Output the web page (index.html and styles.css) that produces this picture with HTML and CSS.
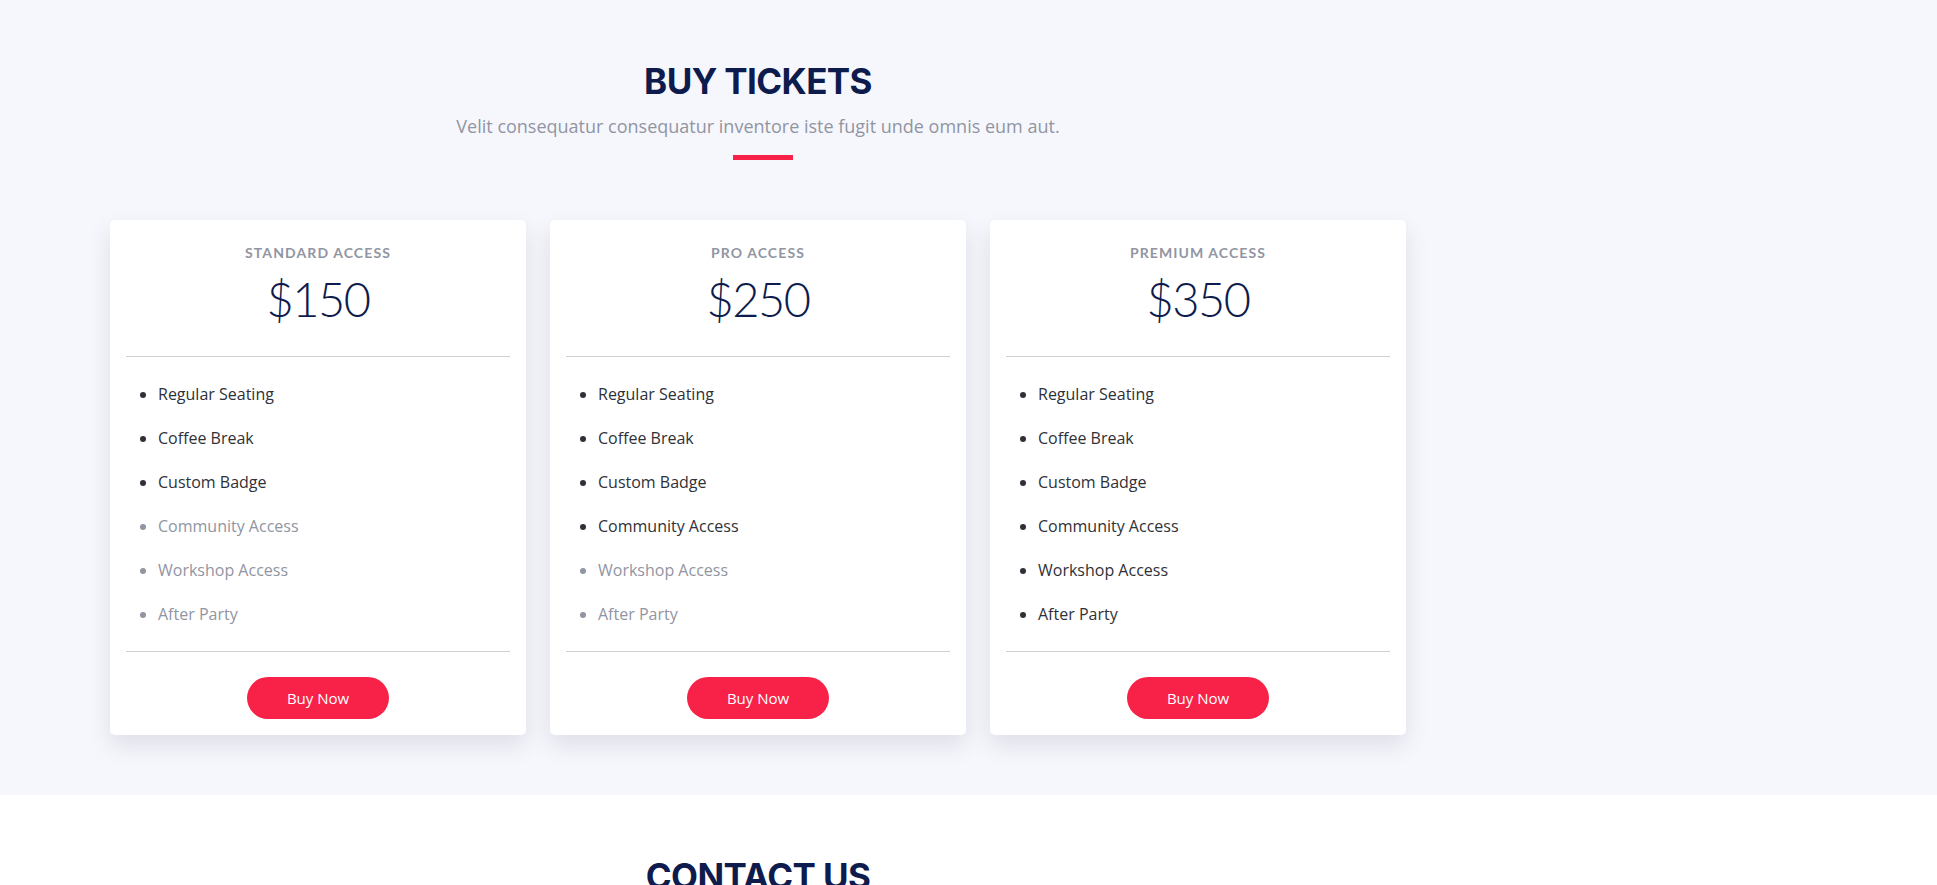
FILE: index.html
```html
<!DOCTYPE html>
<html lang="en">
<head>
<meta charset="utf-8">
<title>Buy Tickets</title>
<link rel="stylesheet" href="styles.css">
</head>
<body>
<section class="buy-tickets">
  <div class="container">
    <div class="section-header">
      <h2>Buy Tickets</h2>
      <p>Velit consequatur consequatur inventore iste fugit unde omnis eum aut.</p>
    </div>
    <div class="ticket-grid">
      <div class="card">
        <h5 class="card-title">Standard Access</h5>
        <h6 class="card-price">$150</h6>
        <hr class="rule">
        <ul class="features">
          <li>Regular Seating</li>
          <li>Coffee Break</li>
          <li>Custom Badge</li>
          <li class="off">Community Access</li>
          <li class="off">Workshop Access</li>
          <li class="off">After Party</li>
        </ul>
        <hr class="rule">
        <div class="action"><a class="btn" href="#">Buy Now</a></div>
      </div>
      <div class="card">
        <h5 class="card-title">Pro Access</h5>
        <h6 class="card-price">$250</h6>
        <hr class="rule">
        <ul class="features">
          <li>Regular Seating</li>
          <li>Coffee Break</li>
          <li>Custom Badge</li>
          <li>Community Access</li>
          <li class="off">Workshop Access</li>
          <li class="off">After Party</li>
        </ul>
        <hr class="rule">
        <div class="action"><a class="btn" href="#">Buy Now</a></div>
      </div>
      <div class="card">
        <h5 class="card-title">Premium Access</h5>
        <h6 class="card-price">$350</h6>
        <hr class="rule">
        <ul class="features">
          <li>Regular Seating</li>
          <li>Coffee Break</li>
          <li>Custom Badge</li>
          <li>Community Access</li>
          <li>Workshop Access</li>
          <li>After Party</li>
        </ul>
        <hr class="rule">
        <div class="action"><a class="btn" href="#">Buy Now</a></div>
      </div>
    </div>
  </div>
</section>
<section class="contact">
  <div class="container">
    <div class="section-header">
      <h2>Contact Us</h2>
      <p>Nihil officia ut sint molestiae tenetur.</p>
    </div>
  </div>
</section>
</body>
</html>
```

FILE: styles.css
```css
* { box-sizing: border-box; }

body {
  margin: 0;
  background: #fff;
  font-family: "Open Sans", "Liberation Sans", sans-serif;
  color: #2f3138;
}

.buy-tickets {
  background: #f6f7fd;
  padding: 60px 0;
}

.contact {
  background: #fff;
  padding: 60px 0;
}

.container {
  width: 1320px;
  margin-left: 98px;
  padding: 0 12px;
}

.section-header {
  position: relative;
  text-align: center;
  padding-bottom: 10px;
  margin-bottom: 60px;
}

.section-header::before {
  content: "";
  position: absolute;
  bottom: 0;
  left: calc(50% - 25px);
  width: 60px;
  height: 5px;
  background: #f82249;
}

.section-header h2 {
  margin: 0 0 10px;
  font-family: Inter, "Liberation Sans", sans-serif;
  font-weight: 700;
  font-size: 35px;
  line-height: 43px;
  letter-spacing: -0.6px;
  text-transform: uppercase;
  color: #0e1b4d;
}

.section-header p {
  margin: 0 0 10px;
  font-size: 18px;
  line-height: 27px;
  color: #9195a2;
}

.ticket-grid {
  display: grid;
  grid-template-columns: repeat(3, 1fr);
  gap: 24px;
}

.card {
  background: #fff;
  border-radius: 5px;
  box-shadow: 0 10px 25px 0 rgba(6, 12, 34, 0.1);
  padding: 16px;
}

.card-title {
  margin: 8px 0 9px;
  font-family: Lato, "Liberation Sans", sans-serif;
  font-weight: 700;
  font-size: 14px;
  line-height: 17px;
  letter-spacing: 1.1px;
  text-transform: uppercase;
  text-align: center;
  color: #9195a2;
}

.card-price {
  margin: 0;
  font-family: Lato, "Liberation Sans", sans-serif;
  font-weight: 300;
  font-size: 47px;
  line-height: 58px;
  letter-spacing: -1.5px;
  text-align: center;
  color: #0e1b4d;
}

.rule {
  margin: 28px 0 25px;
  border: 0;
  border-top: 1px solid #cfd0d4;
  height: 0;
}

.features + .rule {
  margin: 25px 0 25px;
}

.features {
  margin: 0;
  padding-left: 32px;
}

.features li {
  font-size: 16px;
  line-height: 24px;
  margin-bottom: 20px;
  color: #2f3138;
}

.features li.off {
  color: #9195a2;
}

.action {
  text-align: center;
}

.btn {
  display: inline-block;
  background: #f82249;
  color: #fff;
  border-radius: 50px;
  padding: 10px 40px;
  font-size: 15px;
  line-height: 22px;
  text-decoration: none;
}
```
